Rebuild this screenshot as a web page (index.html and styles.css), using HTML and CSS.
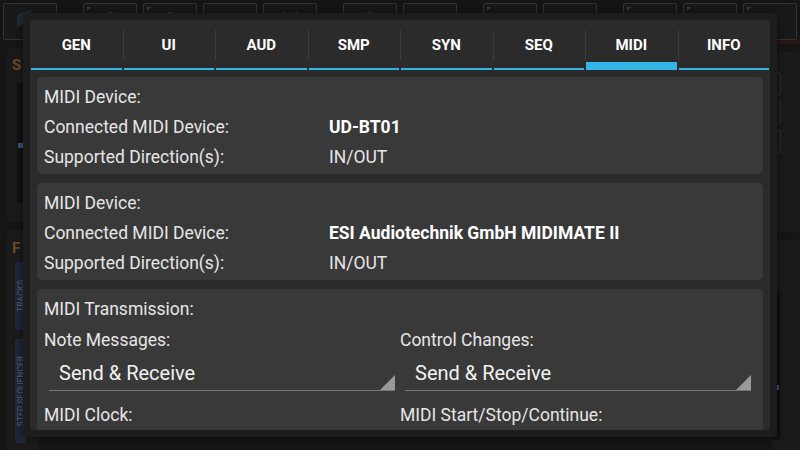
FILE: index.html
```html
<!DOCTYPE html>
<html lang="en">
<head>
  <meta charset="UTF-8" />
  <meta name="viewport" content="width=device-width, initial-scale=1.0" />
  <title>Preferences - MIDI</title>
  <link rel="stylesheet" href="styles.css">
</head>
<body>
  <div class="app">
    <header class="toolbar">
      <div class="tool-group">
        <div class="tool"><span class="tool-icon icon-back"></span></div>
      </div>
      <div class="tool-group">
        <div class="tool corner"><span class="tool-icon icon-knob"></span></div>
        <div class="tool corner"><span class="tool-icon icon-knob"></span></div>
        <div class="tool"></div>
        <div class="tool"><span class="tool-icon icon-mixer"></span></div>
      </div>
      <div class="tool-group">
        <div class="tool"><span class="tool-icon icon-dial"></span></div>
        <div class="tool"><span class="tool-icon icon-grid"></span></div>
      </div>
      <div class="tool-group">
        <div class="tool corner"><span class="tool-icon icon-box"></span></div>
        <div class="tool"><span class="tool-icon icon-grid"></span></div>
      </div>
      <div class="tool-group">
        <div class="tool corner"><span class="tool-icon icon-dot"></span></div>
        <div class="tool corner"><span class="tool-icon icon-box"></span></div>
        <div class="tool corner"><span class="tool-icon icon-play"></span></div>
      </div>
    </header>

    <div class="workspace">
      <aside class="side-left">
        <section class="pane pane-top">
          <span class="pane-title">S</span>
          <div class="slider"><span class="slider-dot"></span></div>
        </section>
        <section class="pane pane-bottom">
          <span class="pane-title">F</span>
          <div class="vtabs">
            <div class="vtab vtab-short"><span>TRACKS</span></div>
            <div class="vtab vtab-long"><span>STEP SEQUENCER</span></div>
          </div>
        </section>
      </aside>
      <main class="stage"></main>
      <aside class="side-right">
        <div class="red-line"></div>
        <section class="pane pane-right">
          <div class="mini-box"></div>
          <div class="mini-box"></div>
          <div class="mini-box"></div>
        </section>
        <section class="pane pane-right-low">
          <div class="slider slider-right"><span class="slider-dot"></span></div>
          <div class="mini-box mini-box-low"></div>
        </section>
      </aside>
    </div>
  </div>

  <div class="dialog">
    <div class="dialog-inner">
      <nav class="tabs">
        <div class="tab"><span class="tab-label">GEN</span><span class="tab-bar"></span></div>
        <div class="tab"><span class="tab-label">UI</span><span class="tab-bar"></span></div>
        <div class="tab"><span class="tab-label">AUD</span><span class="tab-bar"></span></div>
        <div class="tab"><span class="tab-label">SMP</span><span class="tab-bar"></span></div>
        <div class="tab"><span class="tab-label">SYN</span><span class="tab-bar"></span></div>
        <div class="tab"><span class="tab-label">SEQ</span><span class="tab-bar"></span></div>
        <div class="tab active"><span class="tab-label">MIDI</span><span class="tab-bar"></span></div>
        <div class="tab"><span class="tab-label">INFO</span><span class="tab-bar"></span></div>
      </nav>

      <div class="content">
        <section class="card">
          <div class="row">MIDI Device:</div>
          <div class="info">
            <span>Connected MIDI Device:</span>
            <strong>UD-BT01</strong>
            <span>Supported Direction(s):</span>
            <span>IN/OUT</span>
          </div>
        </section>

        <section class="card">
          <div class="row">MIDI Device:</div>
          <div class="info">
            <span>Connected MIDI Device:</span>
            <strong>ESI Audiotechnik GmbH MIDIMATE II</strong>
            <span>Supported Direction(s):</span>
            <span>IN/OUT</span>
          </div>
        </section>

        <section class="card">
          <div class="row">MIDI Transmission:</div>
          <div class="options">
            <div class="option">
              <div class="row">Note Messages:</div>
              <div class="select">Send &amp; Receive</div>
              <div class="row">MIDI Clock:</div>
            </div>
            <div class="option">
              <div class="row">Control Changes:</div>
              <div class="select">Send &amp; Receive</div>
              <div class="row">MIDI Start/Stop/Continue:</div>
            </div>
          </div>
        </section>
      </div>
    </div>
  </div>
</body>
</html>
```

FILE: styles.css
```css
* { box-sizing: border-box; }
body {
  margin: 0;
  width: 800px;
  height: 450px;
  overflow: hidden;
  background: #151515;
  font-family: Roboto, 'Liberation Sans', sans-serif;
  color: #e6e6e6;
  position: relative;
}

/* background app (dimmed behind the dialog) */
.app {
  height: 100%;
  display: flex;
  flex-direction: column;
}
.toolbar {
  display: flex;
  gap: 26px;
  padding: 3px 3px 0;
  height: 42px;
  flex-shrink: 0;
}
.tool-group {
  display: flex;
  gap: 6px;
}
.tool {
  position: relative;
  width: 54px;
  height: 37px;
  border: 1px solid #333;
  border-radius: 2px;
  background: #191919;
  display: flex;
  justify-content: center;
  padding-top: 8px;
}
.tool.corner::before {
  content: '';
  position: absolute;
  left: 3px;
  top: 3px;
  border-top: 4px solid #3a3a3a;
  border-right: 4px solid transparent;
}
.tool-icon {
  display: block;
  width: 20px;
  height: 12px;
  opacity: 0.6;
}
.icon-back { width: 14px; background: #2c3648; transform: translateX(-6px) skewY(-20deg); }
.icon-knob { border-top: 3px dotted #4b5568; border-radius: 50% 50% 0 0; }
.icon-mixer { border-left: 3px solid #3c4659; border-right: 3px solid #3c4659; width: 16px; }
.icon-dial { width: 16px; border: 2px solid #3c4659; border-radius: 50%; height: 16px; }
.icon-grid { width: 26px; height: 8px; margin-top: 4px; background: repeating-linear-gradient(to right, #2f3a4e 0 5px, transparent 5px 7px); }
.icon-box { width: 16px; height: 10px; border: 2px solid #3c4659; border-radius: 3px; margin-top: 4px; }
.icon-dot { width: 14px; height: 14px; border-radius: 50%; background: #2f3a4e; margin-top: 3px; }
.icon-play { width: 0; height: 0; border-left: 12px solid #2f3a4e; border-top: 8px solid transparent; border-bottom: 8px solid transparent; margin-top: 2px; }

.workspace {
  flex: 1;
  display: flex;
  gap: 8px;
  padding: 5px 0 0 7px;
}
.side-left {
  width: 30px;
  display: flex;
  flex-direction: column;
  gap: 8px;
}
.pane {
  background: #1a1a1a;
  border-radius: 5px;
  padding: 6px 5px;
}
.pane-top { height: 175px; }
.pane-bottom { flex: 1; }
.pane-title {
  display: block;
  color: #6a4a2a;
  font-size: 15px;
  font-weight: bold;
  line-height: 16px;
  margin-top: 4px;
}
.slider {
  margin: 10px 0 0 5px;
  width: 8px;
  height: 120px;
  background: #111;
  border-radius: 3px;
  padding-top: 60px;
}
.slider-dot {
  display: block;
  width: 6px;
  height: 5px;
  margin-left: 1px;
  background: #3d5275;
}
.vtabs {
  display: flex;
  flex-direction: column;
  gap: 9px;
  margin: 6px 0 0 3px;
}
.vtab {
  width: 11px;
  background: #1e2739;
  border-radius: 2px;
  display: flex;
  align-items: center;
  justify-content: center;
}
.vtab-short { height: 68px; }
.vtab-long { height: 104px; }
.vtab span {
  writing-mode: vertical-rl;
  transform: rotate(180deg);
  font-size: 8.5px;
  color: #55627c;
  white-space: nowrap;
}
.stage { flex: 1; }
.side-right {
  width: 28px;
  display: flex;
  flex-direction: column;
  gap: 8px;
}
.red-line {
  height: 5px;
  margin-top: -8px;
  background: #2a1616;
}
.pane-right {
  height: 180px;
  display: flex;
  flex-direction: column;
  gap: 6px;
  padding: 20px 0 0 1px;
}
.pane-right-low { flex: 1; padding: 50px 0 0 0; }
.mini-box {
  width: 8px;
  height: 23px;
  border: 1px solid #2e2e2e;
  border-left: none;
  border-radius: 0 3px 3px 0;
}
.slider-right { height: 150px; padding-top: 95px; margin: 0; }
.mini-box-low { width: 12px; height: 14px; border: 1px solid #333; margin-top: 10px; }

/* preferences dialog, lies over the app */
.dialog {
  position: absolute;
  left: 23px;
  top: 13px;
  padding: 7px;
  background: #1d1d1d;
  border-radius: 4px;
  box-shadow: 0 0 8px rgba(0,0,0,0.5);
}
.dialog-inner {
  width: 740px;
  height: 410px;
  background: #2b2b2b;
  border-radius: 3px;
  overflow: hidden;
  display: flex;
  flex-direction: column;
}
.tabs {
  display: flex;
  height: 50px;
  flex-shrink: 0;
}
.tab {
  flex: 1;
  position: relative;
  display: flex;
  flex-direction: column;
}
.tab + .tab::before {
  content: '';
  position: absolute;
  left: 0;
  top: 10px;
  height: 30px;
  width: 1px;
  background: #3c3c3c;
}
.tab-label {
  flex: 1;
  display: flex;
  align-items: center;
  justify-content: center;
  padding-top: 2px;
  font-size: 15px;
  font-weight: bold;
  color: #fff;
}
.tab-bar {
  height: 2px;
  margin: 0 1px;
  background: #33b5e5;
}
.tab.active .tab-bar { height: 8px; }
.tab.active .tab-label { padding-top: 8px; }

.content {
  flex-shrink: 0;
  padding: 7px;
  display: flex;
  flex-direction: column;
  gap: 9px;
}
.card {
  flex-shrink: 0;
  background: #393939;
  border-radius: 5px;
  padding: 5px 7px 2px;
  font-size: 17.5px;
  line-height: 30px;
}
.row { height: 30px; white-space: nowrap; }
.info {
  display: grid;
  grid-template-columns: 285px auto;
}
.info strong { font-weight: bold; color: #fff; }
.options {
  display: grid;
  grid-template-columns: 1fr 1fr;
  margin-top: 1px;
}
.select {
  position: relative;
  margin: 0 5px 9px;
  height: 36px;
  line-height: 36px;
  padding-left: 10px;
  font-size: 20px;
  color: #f2f2f2;
  border-bottom: 1px solid #777;
}
.select::after {
  content: '';
  position: absolute;
  right: 0;
  bottom: 0;
  border-bottom: 15px solid #9a9a9a;
  border-left: 15px solid transparent;
}
```
